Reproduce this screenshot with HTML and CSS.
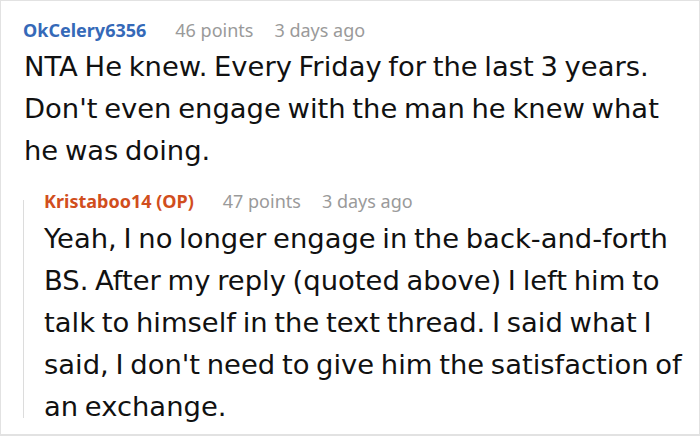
FILE: index.html
```html
<!DOCTYPE html>
<html>
<head>
<meta charset="utf-8">
<link rel="stylesheet" href="styles.css">
</head>
<body>
<div class="card">
  <div class="comment">
    <div class="meta">
      <span class="author author-blue">OkCelery6356</span>
      <span class="stat">46 points</span>
      <span class="stat">3 days ago</span>
    </div>
    <p class="body body-top">NTA He knew. Every Friday for the last 3 years. Don't even engage with the man he knew what he was doing.</p>
    <div class="reply">
      <div class="meta">
        <span class="author author-orange">Kristaboo14 (OP)</span>
        <span class="stat">47 points</span>
        <span class="stat">3 days ago</span>
      </div>
      <p class="body body-reply">Yeah, I no longer engage in the back-and-forth BS. After my reply (quoted above) I left him to talk to himself in the text thread. I said what I said, I don't need to give him the satisfaction of an exchange.</p>
    </div>
  </div>
</div>
</body>
</html>
```

FILE: styles.css
```css
* { box-sizing: border-box; }
html, body { margin: 0; padding: 0; background: #fff; }
body { font-family: "Noto Sans", "Open Sans", sans-serif; color: #111; }
.card {
  width: 700px;
  height: 436px;
  border: 1px solid #e2e2e2;
  border-bottom-width: 2px;
  overflow: hidden;
}
.comment { padding: 17px 0 0 22px; }
.meta { display: flex; gap: 21px; align-items: baseline; font-size: 18px; line-height: 24px; }
.author { font-weight: 700; margin-right: 8px; }
.author-blue { color: #3569b8; }
.author-orange { color: #d14e1d; }
.stat { color: #9a9a9a; }
.body {
  margin: 4px 0 0 1px;
  font-family: "DejaVu Sans", sans-serif;
  font-size: 27.4px;
  line-height: 42px;
  word-spacing: -2px;
}
.body-top { margin-right: 19px; }
.reply { position: relative; margin-top: 17px; padding-left: 21px; }
.reply::before {
  content: "";
  position: absolute;
  left: 0;
  top: 11px;
  bottom: 10px;
  border-left: 1px solid #dcdcdc;
}
.body-reply { margin: 5px 8px 0 0; }
```
